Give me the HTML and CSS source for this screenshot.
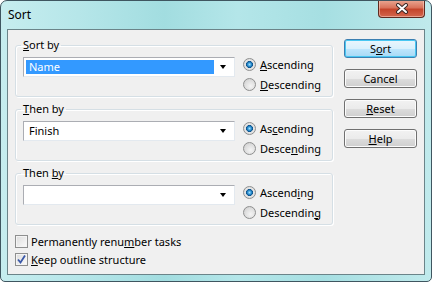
FILE: index.html
```html
<!DOCTYPE html>
<html>
<head>
  <title>Sort</title>
  <link rel="stylesheet" href="styles.css">
</head>
<body>
  <div class="window">
    <div class="titlebar">
      <span class="title">Sort</span>
      <button class="close" aria-label="Close">
        <svg width="14" height="11" viewBox="0 0 14 11">
          <path d="M3,2 L11,9 M11,2 L3,9" stroke="#3b2a28" stroke-width="4" stroke-linecap="round"/>
          <path d="M3,2 L11,9 M11,2 L3,9" stroke="#ffffff" stroke-width="2" stroke-linecap="round"/>
        </svg>
      </button>
    </div>

    <div class="client">
      <div class="groups">
        <fieldset class="group">
          <legend><u>S</u>ort by</legend>
          <div class="row">
            <div class="combo">
              <span class="value selected">Name</span>
              <span class="arrow"></span>
            </div>
            <div class="radios">
              <label class="radio"><span class="circle on"></span><span><u>A</u>scending</span></label>
              <label class="radio"><span class="circle"></span><span><u>D</u>escending</span></label>
            </div>
          </div>
        </fieldset>

        <fieldset class="group">
          <legend><u>T</u>hen by</legend>
          <div class="row">
            <div class="combo">
              <span class="value">Finish</span>
              <span class="arrow"></span>
            </div>
            <div class="radios">
              <label class="radio"><span class="circle on"></span><span>As<u>c</u>ending</span></label>
              <label class="radio"><span class="circle"></span><span>Desce<u>n</u>ding</span></label>
            </div>
          </div>
        </fieldset>

        <fieldset class="group">
          <legend>Then <u>b</u>y</legend>
          <div class="row">
            <div class="combo">
              <span class="value"></span>
              <span class="arrow"></span>
            </div>
            <div class="radios">
              <label class="radio"><span class="circle on"></span><span>Ascend<u>i</u>ng</span></label>
              <label class="radio"><span class="circle"></span><span>Descendin<u>g</u></span></label>
            </div>
          </div>
        </fieldset>

        <div class="options">
          <label class="check"><span class="box"></span><span>Permanently renu<u>m</u>ber tasks</span></label>
          <label class="check">
            <span class="box">
              <svg width="11" height="11" viewBox="0 0 11 11">
                <path d="M2,5.5 L4.5,8.5 L9,1.5" fill="none" stroke="#3a58a8" stroke-width="1.8"/>
              </svg>
            </span>
            <span><u>K</u>eep outline structure</span>
          </label>
        </div>
      </div>

      <div class="buttons">
        <button class="btn default">S<u>o</u>rt</button>
        <button class="btn">Cancel</button>
        <button class="btn"><u>R</u>eset</button>
        <button class="btn"><u>H</u>elp</button>
      </div>
    </div>
  </div>
</body>
</html>
```

FILE: styles.css
```css
body {
  margin: 0;
  font-family: "Noto Sans", sans-serif;
  font-size: 11px;
  color: #000;
}
.window {
  width: 432px;
  height: 282px;
  box-sizing: border-box;
  border: 1px solid #3f5660;
  border-radius: 7px 7px 5px 5px;
  background: linear-gradient(90deg, #c6edef 0%, #b6e6e9 18%, #a2dde0 38%, #b4e6e9 55%, #a6dfe2 75%, #c0eaec 100%);
  display: flex;
  flex-direction: column;
  overflow: hidden;
}
.titlebar {
  height: 28px;
  display: flex;
  justify-content: space-between;
  align-items: flex-start;
  padding: 0 6px 0 7px;
}
.title {
  font-size: 12px;
  line-height: 28px;
}
.close {
  width: 47px;
  height: 18px;
  margin-top: -1px;
  padding: 0;
  border: 1px solid #5e2a20;
  border-top: none;
  border-radius: 0 0 4px 4px;
  background: linear-gradient(#eaa994 0%, #d9735b 45%, #c4452b 55%, #d3674e 100%);
  box-shadow: inset 0 0 0 1px rgba(255, 220, 210, 0.5);
  display: flex;
  align-items: center;
  justify-content: center;
}
.client {
  flex: 1;
  margin: 0 6px 6px 6px;
  border: 1px solid #6b8489;
  background: #f0f0f0;
  display: flex;
  gap: 11px;
  padding: 8px 7px 0 7px;
}
.groups {
  width: 318px;
  display: flex;
  flex-direction: column;
  gap: 5px;
}
.group {
  min-width: 0;
  margin: 0;
  padding: 0 7px 2px 7px;
  border: 1px solid #d5dfe5;
  border-radius: 3px;
  box-shadow: inset 1px 1px 0 #fff, 1px 1px 0 #fff;
}
.group legend {
  padding: 0 2px;
  margin-left: -2px;
  line-height: 14px;
}
.row {
  display: flex;
  align-items: flex-start;
  margin-top: 2px;
}
.combo {
  width: 212px;
  height: 20px;
  flex-shrink: 0;
  box-sizing: border-box;
  margin-top: 3px;
  border: 1px solid #abadb3;
  border-color: #abadb3 #e3e9ef #e3e9ef #abadb3;
  background: #fff;
  display: flex;
  align-items: center;
  padding: 0 2px;
}
.value {
  width: 188px;
  height: 14px;
  line-height: 14px;
  padding-left: 3px;
  box-sizing: border-box;
}
.value.selected {
  background: #3399ff;
  color: #fff;
}
.arrow {
  flex: 1;
  display: flex;
  justify-content: center;
}
.arrow::after {
  content: "";
  border-left: 3.5px solid transparent;
  border-right: 3.5px solid transparent;
  border-top: 4px solid #000;
}
.radios {
  margin-left: 8px;
  display: flex;
  flex-direction: column;
  white-space: nowrap;
}
.radio {
  height: 20px;
  display: flex;
  align-items: center;
  gap: 4px;
}
.circle {
  width: 13px;
  height: 13px;
  box-sizing: border-box;
  border-radius: 50%;
  border: 1px solid #8e8f8f;
  background: radial-gradient(circle at 60% 65%, #f4f4f4 0%, #dcdcdc 60%, #c8c8c8 100%);
}
.circle.on {
  background: radial-gradient(circle, #9fe0ff 0%, #2a8ed0 25%, #0d4f86 42%, #e6e6e6 48%, #d8d8d8 100%);
}
.options {
  margin-top: 2px;
  display: flex;
  flex-direction: column;
}
.check {
  height: 18px;
  display: flex;
  align-items: center;
  gap: 3px;
}
.box {
  width: 13px;
  height: 13px;
  flex-shrink: 0;
  box-sizing: border-box;
  border: 1px solid #8e8f8f;
  background: linear-gradient(135deg, #dcdcdc, #fbfbfb);
  box-shadow: inset 0 0 0 1px #f4f4f4;
  display: flex;
  align-items: center;
  justify-content: center;
}
.buttons {
  margin-top: 1px;
  display: flex;
  flex-direction: column;
  gap: 11px;
}
.btn {
  width: 73px;
  height: 19px;
  padding: 0;
  font: inherit;
  color: #000;
  line-height: 15px;
  border: 1px solid #707070;
  border-radius: 3px;
  background: linear-gradient(#f2f2f2 0%, #ebebeb 50%, #dddddd 51%, #cfcfcf 100%);
  box-shadow: inset 0 0 0 1px #fcfcfc;
}
.btn.default {
  border-color: #3c7fb1;
  background: linear-gradient(#eaf6fd 0%, #d9f0fc 50%, #bee6fd 51%, #a7d9f5 100%);
  box-shadow: inset 0 0 0 1px #48c7f2;
}
```
